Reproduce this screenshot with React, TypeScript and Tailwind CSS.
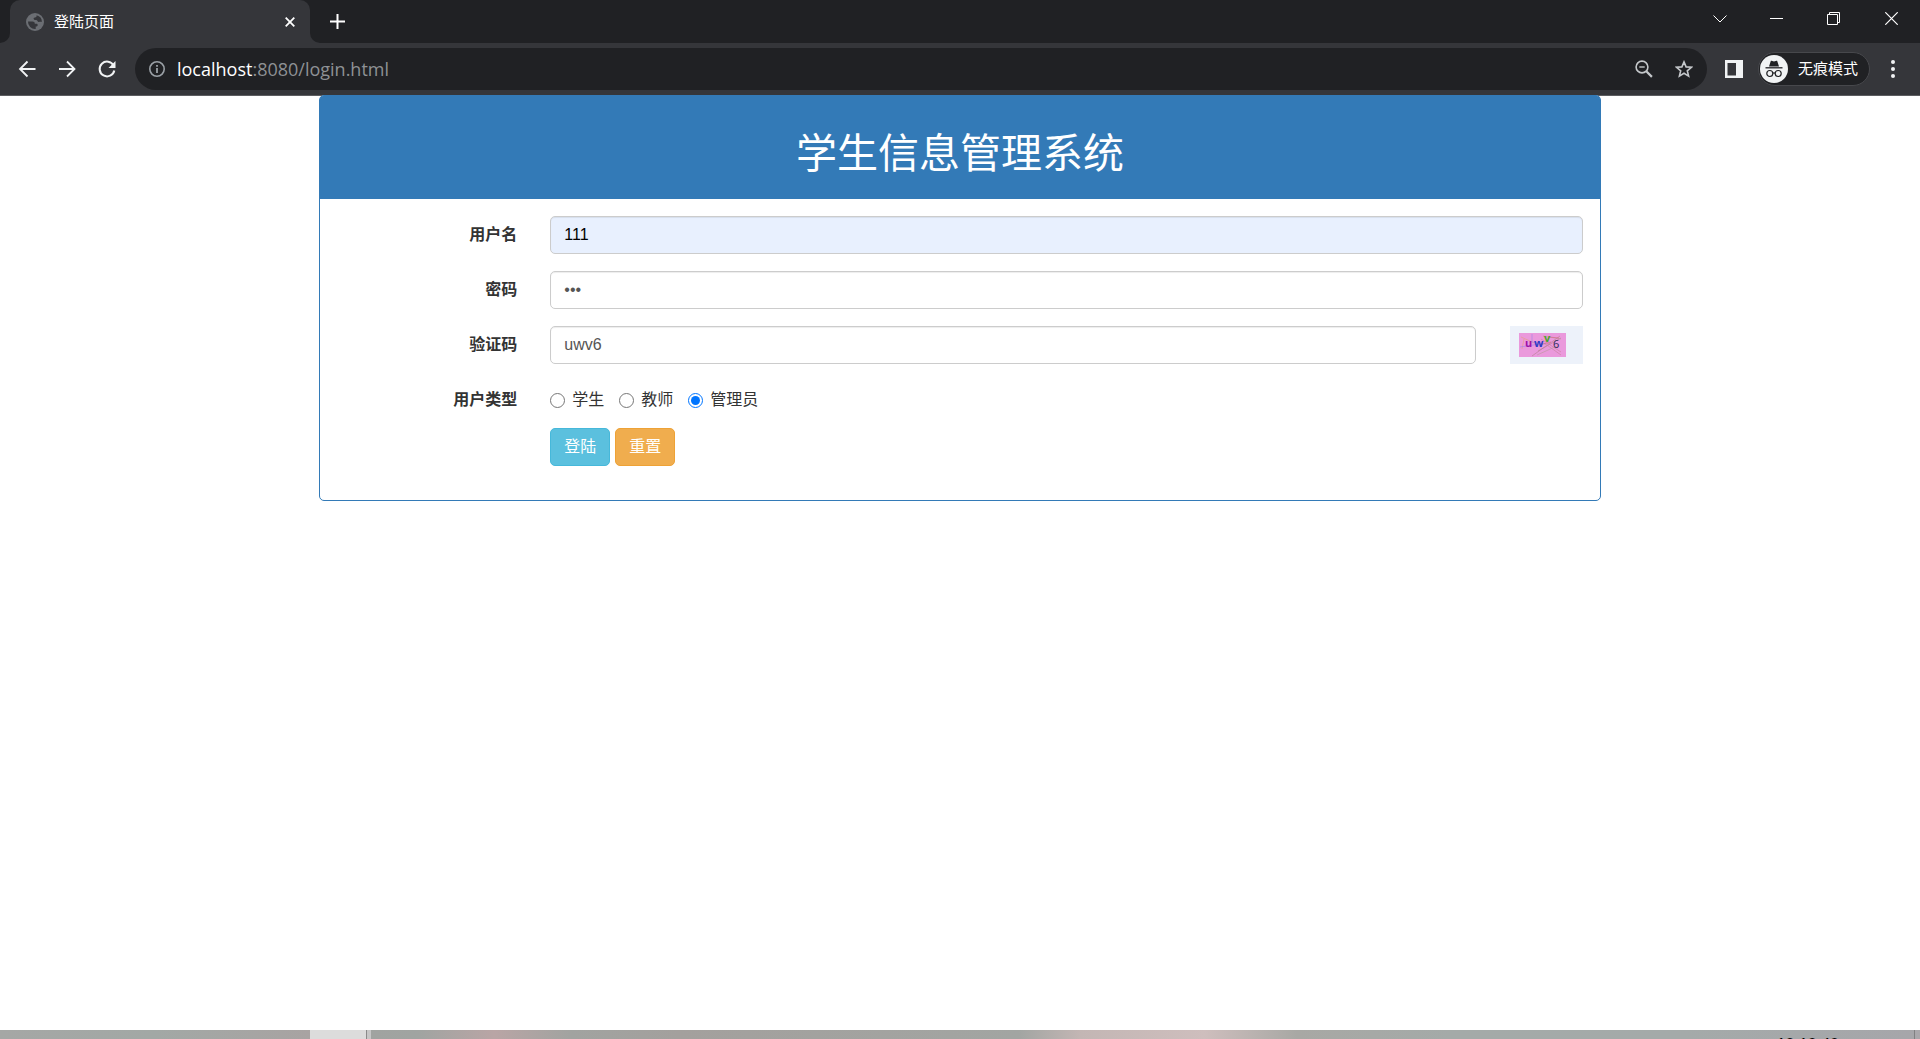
import { useState } from 'react'
import type { FormEvent } from 'react'

const userTypes = [
  { value: 'student', label: '学生' },
  { value: 'teacher', label: '教师' },
  { value: 'admin', label: '管理员' },
]

const labelClass = 'col-span-2 pt-2 pr-4 text-right text-base leading-[22px] font-bold text-[#333]'
const inputClass =
  'block h-[38px] w-full rounded-[5px] border border-[#ccc] px-[13px] text-base leading-[22px] shadow-[inset_0_1px_1px_rgba(0,0,0,0.075)] outline-none focus:border-[#66afe9]'

// Tab strip with the window controls on the right
function TabStrip() {
  return (
    <div className="flex h-[43px] items-stretch bg-[#202124] pl-[10px]">
      <div className="relative flex w-[300px] items-center rounded-t-[10px] bg-[#35363a] pr-[10px] pl-4">
        <svg className="absolute bottom-0 -left-[10px] h-[10px] w-[10px]" viewBox="0 0 10 10" fill="#35363a">
          <path d="M10 0v10H0A10 10 0 0 0 10 0z" />
        </svg>
        <svg className="absolute -right-[10px] bottom-0 h-[10px] w-[10px]" viewBox="0 0 10 10" fill="#35363a">
          <path d="M0 0v10h10A10 10 0 0 1 0 0z" />
        </svg>
        <svg className="h-[18px] w-[18px]" viewBox="0 0 18 18">
          <circle cx="9" cy="9" r="9" fill="#6b6e73" />
          <path
            d="M2 8.500h4.500c1.600 0 2.300.9 2.300 2.200h1.700c.9 0 1.200.6 1.200 1.300 0 1.100-.8 1.600-2 1.600v2.300A7 7 0 0 1 2 8.500z"
            fill="#35363a"
          />
          <path
            d="M10.500 2.200c.4 1.300-.3 2.200-1.600 2.400-1.200.200-1.400.7-1.200 1.500.3 1 1.300 1 2.500 1 1.100 0 1.200 1.600 2.200 1.800 1.200.200 2.200-.4 3.500.1A7 7 0 0 0 10.500 2.200z"
            fill="#35363a"
          />
        </svg>
        <span className="ml-[10px] flex-1 text-[15px] leading-5 text-white">登陆页面</span>
        <button type="button" aria-label="关闭标签页" className="flex h-5 w-5 items-center justify-center">
          <svg className="h-[10px] w-[10px]" viewBox="0 0 10 10" stroke="#fff" strokeWidth="1.8" fill="none">
            <path d="M.7.7l8.600 8.600M9.300.7L.7 9.300" />
          </svg>
        </button>
      </div>
      <button type="button" aria-label="新标签页" className="ml-[17px] flex w-5 items-center justify-center">
        <svg className="h-[15px] w-[15px]" viewBox="0 0 15 15" stroke="#fff" strokeWidth="2" fill="none">
          <path d="M7.500 0v15M0 7.500h15" />
        </svg>
      </button>
      <div className="ml-auto flex h-[37px] text-white">
        <button type="button" aria-label="搜索标签页" className="flex w-[57px] items-center justify-center">
          <svg className="h-[14px] w-[14px]" viewBox="0 0 14 14" stroke="currentColor" fill="none">
            <path d="M.5 3.500L7 10l6.500-6.500" />
          </svg>
        </button>
        <button type="button" aria-label="最小化" className="flex w-[57px] items-center justify-center">
          <svg className="h-[13px] w-[13px]" viewBox="0 0 13 13" stroke="currentColor" fill="none">
            <path d="M0 6.500h13" />
          </svg>
        </button>
        <button type="button" aria-label="还原" className="flex w-[57px] items-center justify-center">
          <svg className="h-[13px] w-[13px]" viewBox="0 0 13 13" stroke="currentColor" fill="none">
            <path d="M.5 2.500h10v10H.500zM2.500 2.500v-2h10v10h-2" />
          </svg>
        </button>
        <button type="button" aria-label="关闭" className="flex w-[58px] items-center justify-center">
          <svg className="h-[13px] w-[13px]" viewBox="0 0 13 13" stroke="currentColor" strokeWidth="1.200" fill="none">
            <path d="M.3.300l12.400 12.400M12.700.300L.300 12.700" />
          </svg>
        </button>
      </div>
    </div>
  )
}

// Navigation buttons, address bar and incognito badge
function Toolbar() {
  return (
    <div className="flex h-[53px] items-center border-b border-[#5c5d60] bg-[#35363a] pr-[18px] pl-[15px] text-white">
      <div className="flex gap-4">
        <button type="button" aria-label="后退">
          <svg className="h-6 w-6" viewBox="0 0 24 24" fill="none" stroke="#f1f3f4" strokeWidth="1.800">
            <path d="M20.500 12H5M12.500 4.500L5 12l7.500 7.500" />
          </svg>
        </button>
        <button type="button" aria-label="前进">
          <svg className="h-6 w-6" viewBox="0 0 24 24" fill="none" stroke="#f1f3f4" strokeWidth="1.800">
            <path d="M4 12h15M12 4.500l7.500 7.500-7.500 7.500" />
          </svg>
        </button>
        <button type="button" aria-label="重新加载">
          <svg className="h-6 w-6" viewBox="0 0 24 24">
            <path d="M18.600 8.500A7.400 7.400 0 1 0 19.300 13.500" fill="none" stroke="#f1f3f4" strokeWidth="2" />
            <path d="M20.500 4v7h-7z" fill="#f1f3f4" />
          </svg>
        </button>
      </div>
      <div className="ml-4 flex h-[42px] flex-1 items-center rounded-full bg-[#202124] pr-[14px] pl-[14px]">
        <svg className="h-4 w-4 shrink-0" viewBox="0 0 16 16">
          <circle cx="8" cy="8" r="7.200" fill="none" stroke="#9aa0a6" strokeWidth="1.600" />
          <path d="M7.100 7h1.800v5H7.100zM7.100 4h1.800v1.800H7.100z" fill="#9aa0a6" />
        </svg>
        <div className="ml-3 flex-1 font-['Open_Sans','Noto_Sans_CJK_SC',sans-serif] text-lg leading-6 text-[#8e9195]">
          <span className="text-white">localhost</span>:8080/login.html
        </div>
        <button type="button" aria-label="缩放">
          <svg className="h-[18px] w-[18px]" viewBox="0 0 18 18" fill="none" stroke="#c4c7ca">
            <circle cx="7" cy="7" r="5.900" strokeWidth="1.600" />
            <path d="M11.300 11.300l5.600 5.600" strokeWidth="2.200" />
            <path d="M4.300 7h5.400" strokeWidth="1.400" />
          </svg>
        </button>
        <button type="button" aria-label="为此标签页添加书签" className="ml-[22px]">
          <svg className="h-[18px] w-[18px]" viewBox="0 0 18 18" fill="none" stroke="#c4c7ca" strokeWidth="1.600">
            <path d="M9 1.900l2.100 5 5.300.4-4.100 3.500 1.300 5.300L9 13.300l-4.600 2.800 1.300-5.300-4.100-3.500 5.300-.4z" />
          </svg>
        </button>
      </div>
      <button type="button" aria-label="侧边栏" className="ml-[18px]">
        <svg className="h-[18px] w-[18px]" viewBox="0 0 18 18" fill="#f1f3f4">
          <path fillRule="evenodd" d="M0 0h18v18H0zM2.500 3v12.500H11V3z" />
        </svg>
      </button>
      <div className="ml-[15px] flex h-[34px] items-center rounded-full border border-[#47484c] bg-[#202124] pr-[11px] pl-px">
        <svg className="h-7 w-7" viewBox="0 0 28 28">
          <circle cx="14" cy="14" r="14" fill="#f1f3f4" />
          <path d="M9 11.500l1.700-5.300c.1-.400.500-.500.800-.400l2.500.7 2.500-.7c.3-.1.700 0 .8.400L19 11.500z" fill="#202124" />
          <path d="M5.500 12.800h17" stroke="#202124" strokeWidth="1.300" />
          <g fill="none" stroke="#202124" strokeWidth="1.200">
            <circle cx="9.800" cy="18.500" r="3" />
            <circle cx="18.200" cy="18.500" r="3" />
            <path d="M12.800 18.200q1.200-.8 2.400 0" />
          </g>
        </svg>
        <span className="ml-[10px] text-[15px] leading-5">无痕模式</span>
      </div>
      <button type="button" aria-label="自定义及控制" className="ml-[14px]">
        <svg className="h-[18px] w-[18px]" viewBox="0 0 18 18" fill="#f1f3f4">
          <circle cx="9" cy="2" r="2" />
          <circle cx="9" cy="9" r="2" />
          <circle cx="9" cy="16" r="2" />
        </svg>
      </button>
    </div>
  )
}

// Captcha picture: letters over noise lines
function Captcha() {
  return (
    <svg className="h-6 w-[47px] overflow-visible" viewBox="0 0 47 24" role="img" aria-label="验证码图片">
      <rect width="47" height="24" fill="#ea99dc" />
      <g fill="none" strokeWidth=".6">
        <path d="M2 4l20 9M3 16l2-10" stroke="#e5a07a" />
        <path d="M13 1v8l14 2M1 14l20-3" stroke="#9a83ea" />
        <path d="M13 23L41 3M19 18l23-13" stroke="#b5808f" />
        <path d="M25 10l17 12M22 6l20 13" stroke="#c77f9a" />
        <path d="M18 22l20-9M24 3l18 3" stroke="#b99a9a" />
        <path d="M30 4l10 1M20 12l12-3" stroke="#d3677b" />
      </g>
      <g fontFamily="'Noto Sans', sans-serif" fontSize="11">
        <text x="6" y="14" fill="#a012a8" fontWeight="700">u</text>
        <text x="15" y="14" fill="#3038c4" fontWeight="700">w</text>
        <text x="25" y="9" fill="#4ba32c" fontWeight="700">v</text>
        <text x="34" y="15" fill="#33305e">6</text>
      </g>
    </svg>
  )
}

function LoginPanel() {
  const [username, setUsername] = useState('111')
  const [password, setPassword] = useState('111')
  const [code, setCode] = useState('uwv6')
  const [userType, setUserType] = useState('admin')

  const handleSubmit = (e: FormEvent) => {
    e.preventDefault()
  }

  const handleReset = () => {
    setUsername('')
    setPassword('')
    setCode('')
    setUserType('student')
  }

  return (
    <section className="mx-auto w-full max-w-[1282px] rounded-[5px] border border-[#337ab7] bg-white">
      <header className="rounded-t-[3px] bg-[#337ab7] pt-9 pb-[22px]">
        <h1 className="text-center text-[41px] leading-[45px] text-white">学生信息管理系统</h1>
      </header>
      <form onSubmit={handleSubmit} className="pt-[17px] pb-[34px]">
        <div className="mb-[17px] grid grid-cols-12">
          <label htmlFor="username" className={labelClass}>用户名</label>
          <div className="col-span-10 px-[17px]">
            <input
              id="username"
              type="text"
              value={username}
              onChange={(e) => setUsername(e.target.value)}
              className={`${inputClass} bg-[#e8f0fe] text-black`}
            />
          </div>
        </div>
        <div className="mb-[17px] grid grid-cols-12">
          <label htmlFor="password" className={labelClass}>密码</label>
          <div className="col-span-10 px-[17px]">
            <input
              id="password"
              type="password"
              value={password}
              onChange={(e) => setPassword(e.target.value)}
              className={`${inputClass} text-[#555]`}
            />
          </div>
        </div>
        <div className="mb-[17px] grid grid-cols-12">
          <label htmlFor="code" className={labelClass}>验证码</label>
          <div className="col-span-9 px-[17px]">
            <input
              id="code"
              type="text"
              value={code}
              onChange={(e) => setCode(e.target.value)}
              className={`${inputClass} text-[#555]`}
            />
          </div>
          <div className="px-[17px]">
            <button type="button" aria-label="换一张" className="flex h-[38px] w-full items-center bg-[#edf2fa] pl-[9px]">
              <Captcha />
            </button>
          </div>
        </div>
        <div className="mb-[17px] grid grid-cols-12">
          <span id="user-type" className={labelClass}>用户类型</span>
          <div role="radiogroup" aria-labelledby="user-type" className="col-span-10 flex gap-[15px] px-[17px] pt-2">
            {userTypes.map((t) => (
              <label key={t.value} className="flex items-center gap-[7px] text-base leading-[22px] text-[#333]">
                <input
                  type="radio"
                  name="userType"
                  value={t.value}
                  checked={userType === t.value}
                  onChange={() => setUserType(t.value)}
                  className="h-[15px] w-[15px]"
                />
                {t.label}
              </label>
            ))}
          </div>
        </div>
        <div className="grid grid-cols-12">
          <div className="col-span-10 col-start-3 flex gap-[5px] px-[17px]">
            <button type="submit" className="h-[38px] rounded-[5px] border border-[#46b8da] bg-[#5bc0de] px-[13px] text-base leading-[22px] text-white">
              登陆
            </button>
            <button type="button" onClick={handleReset} className="h-[38px] rounded-[5px] border border-[#eea236] bg-[#f0ad4e] px-[13px] text-base leading-[22px] text-white">
              重置
            </button>
          </div>
        </div>
      </form>
    </section>
  )
}

// Only the top edge of the desktop taskbar is in view
function Taskbar() {
  return (
    <footer className="flex h-[9px] overflow-hidden bg-[#a3a5a3]">
      <div className="w-[310px] shrink-0 bg-linear-to-r from-[#a5a7a5] via-[#a2a8a5] to-[#a8a3a2]" />
      <div className="w-14 shrink-0 bg-[#dcdcdc]" />
      <div className="w-[5px] shrink-0 border-l border-[#8a8a8a] bg-[#c6c6c6]" />
      <div className="flex flex-1 justify-end bg-[linear-gradient(90deg,#a0a3a0_0%,#a0a4a1_3%,#b9a5a5_8%,#a1a3a0_13%,#a3a09d_20%,#a2a5a2_42%,#c3b6b4_46%,#cebebd_54%,#a8a8a4_60%,#a4aaa8_70%,#a4aaa9_85%,#a6a6aa_100%)] pt-[5px] pr-[75px]">
        <time className="text-base leading-5 text-black">10:10:40</time>
      </div>
      <div className="w-[6px] shrink-0 border-l border-[#808082] bg-[#a9a7ab]" />
    </footer>
  )
}

export default function App() {
  return (
    <div className="flex min-h-screen flex-col bg-white font-['Liberation_Sans','Noto_Sans_CJK_SC',sans-serif]">
      <TabStrip />
      <Toolbar />
      <main className="-mt-px flex-1">
        <LoginPanel />
      </main>
      <Taskbar />
    </div>
  )
}
